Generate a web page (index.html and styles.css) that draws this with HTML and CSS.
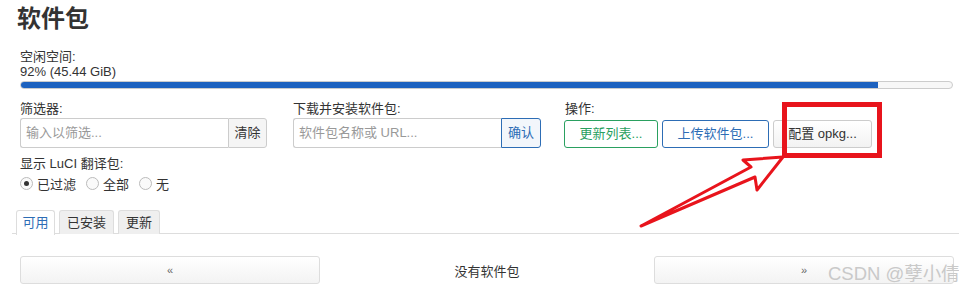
FILE: index.html
```html
<!DOCTYPE html>
<html lang="zh">
<head>
<meta charset="utf-8">
<link rel="stylesheet" href="styles.css">
</head>
<body>
<div class="page">
  <h2 class="title">软件包</h2>
  <div class="free">
    <div class="label">空闲空间:</div>
    <div class="value">92% (45.44 GiB)</div>
    <div class="bar"><div class="bar-fill" style="width:92%"></div></div>
  </div>
  <div class="controls">
    <div class="group g1">
      <div class="label">筛选器:</div>
      <div class="input-group">
        <div class="input ph">输入以筛选...</div>
        <div class="addon btn-clear">清除</div>
      </div>
    </div>
    <div class="group g2">
      <div class="label">下载并安装软件包:</div>
      <div class="input-group">
        <div class="input ph">软件包名称或 URL...</div>
        <div class="addon btn-ok">确认</div>
      </div>
    </div>
    <div class="group g3">
      <div class="label">操作:</div>
      <div class="actions">
        <div class="btn btn-green">更新列表...</div>
        <div class="btn btn-blue">上传软件包...</div>
        <div class="btn btn-gray">配置 opkg...</div>
      </div>
    </div>
  </div>
  <div class="i18n">
    <div class="label">显示 LuCI 翻译包:</div>
    <div class="radios">
      <span class="radio checked"></span><span class="rlabel">已过滤</span>
      <span class="radio"></span><span class="rlabel">全部</span>
      <span class="radio"></span><span class="rlabel">无</span>
    </div>
  </div>
  <div class="tabs">
    <div class="tab active">可用</div>
    <div class="tab">已安装</div>
    <div class="tab">更新</div>
  </div>
  <div class="pager">
    <div class="pbtn prev">«</div>
    <div class="pinfo">没有软件包</div>
    <div class="pbtn next">»</div>
  </div>
</div>
<div class="watermark">CSDN @孽小倩</div>
<svg class="annot" width="959" height="288" viewBox="0 0 959 288">
  <rect x="784.5" y="104.5" width="95" height="51" fill="none" stroke="#e8141c" stroke-width="5"/>
  <polygon points="641,226 751,167 743,160 783,157 757,190 755,177" fill="none" stroke="#e8141c" stroke-width="3" stroke-linejoin="round"/>
</svg>
</body>
</html>
```
FILE: styles.css
```css
* { box-sizing: border-box; }
html, body { margin: 0; padding: 0; background: #fff; }
body {
  width: 959px; height: 288px; overflow: hidden; position: relative;
  font-family: "Liberation Sans", "Noto Sans CJK SC", sans-serif;
  font-size: 13px; color: #333;
}
.page { padding: 0 0 0 20px; }
.title {
  margin: 0 0 0 -3px; padding-top: 3px;
  font-size: 24px; line-height: 32px; font-weight: bold; color: #333;
}
.label { font-size: 13px; line-height: 14px; color: #333; }
.free { margin-top: 15px; padding-right: 6px; }
.free .value { font-size: 13px; line-height: 15px; }
.bar {
  margin-top: 2px; height: 8px; border: 1px solid #ccc; border-radius: 4px;
  overflow: hidden; background: #f7f7f7;
}
.bar-fill { height: 100%; background: #1d62bf; }
.controls { display: flex; margin-top: 13px; }
.group .label { height: 16px; }
.g1 { width: 247px; }
.g2 { width: 248px; margin-left: 26px; }
.g3 { margin-left: 24px; }
.input-group { display: flex; height: 30px; margin-top: 0; }
.input {
  flex: 1; border: 1px solid #ccc; border-right: none; border-radius: 3px 0 0 3px;
  padding: 0 5px; line-height: 28px; font-size: 13px; color: #999;
}
.addon {
  border: 1px solid #ccc; border-radius: 0 3px 3px 0; padding: 0 7px;
  line-height: 28px; font-size: 13px;
}
.btn-clear { background: #f5f5f5; color: #333; width: 39px; text-align: center; padding: 0; }
.btn-ok { border-color: #2d6db5; color: #2d6db5; background: #f2f6fb; width: 40px; text-align: center; padding: 0; }
.actions { display: flex; gap: 4px; margin-top: 2px; margin-left: -1px; }
.btn {
  height: 28px; line-height: 26px; border: 1px solid #ccc; border-radius: 3px;
  text-align: center; font-size: 13px; background: #fff;
}
.btn-green { width: 94px; border-color: #2aa060; color: #2aa060; }
.btn-blue { width: 107px; border-color: #2d6db5; color: #2d6db5; }
.btn-gray { width: 99px; color: #333; background: linear-gradient(#fff, #f2f2f2); }
.i18n { margin-top: 8px; }
.i18n .label { font-size: 13px; line-height: 16px; }
.radios { display: flex; align-items: center; height: 20px; margin-top: 1px; }
.radio {
  width: 13px; height: 13px; border: 1px solid #bbb; border-radius: 50%;
  display: inline-block; position: relative; background: #fafafa;
}
.radio.checked::after {
  content: ""; position: absolute; left: 3px; top: 3px; width: 5px; height: 5px;
  border-radius: 50%; background: #333;
}
.rlabel { margin: 0 10px 0 4px; font-size: 13px; }
.tabs {
  display: flex; gap: 4px; margin: 17px 0 0 -8px; padding-left: 4px;
  border-bottom: 1px solid #ddd; height: 24px;
}
.tab {
  flex-shrink: 0;
  height: 24px; line-height: 23px; padding: 0 7px; border: 1px solid #ddd; border-bottom: none;
  border-radius: 3px 3px 0 0; background: #efefef; color: #333; font-size: 13px;
}
.tab.active { background: #fff; color: #2d6db5; height: 25px; width: 39px; padding: 0; text-align: center; }
.pager { display: flex; align-items: center; margin-top: 22px; }
.pbtn {
  flex-shrink: 0;
  height: 28px; line-height: 27px; border: 1px solid #ddd; border-radius: 3px;
  background: linear-gradient(#fff, #f3f3f3); text-align: center; font-size: 11px; color: #666;
}
.prev { width: 300px; }
.pinfo { flex-shrink: 0; width: 334px; text-align: center; font-size: 13px; color: #333; }
.next { width: 300px; }
.watermark {
  position: absolute; left: 828px; top: 259px; font-size: 18.5px; color: #c9c9c9;
  white-space: nowrap;
}
.annot { position: absolute; left: 0; top: 0; pointer-events: none; }
```
